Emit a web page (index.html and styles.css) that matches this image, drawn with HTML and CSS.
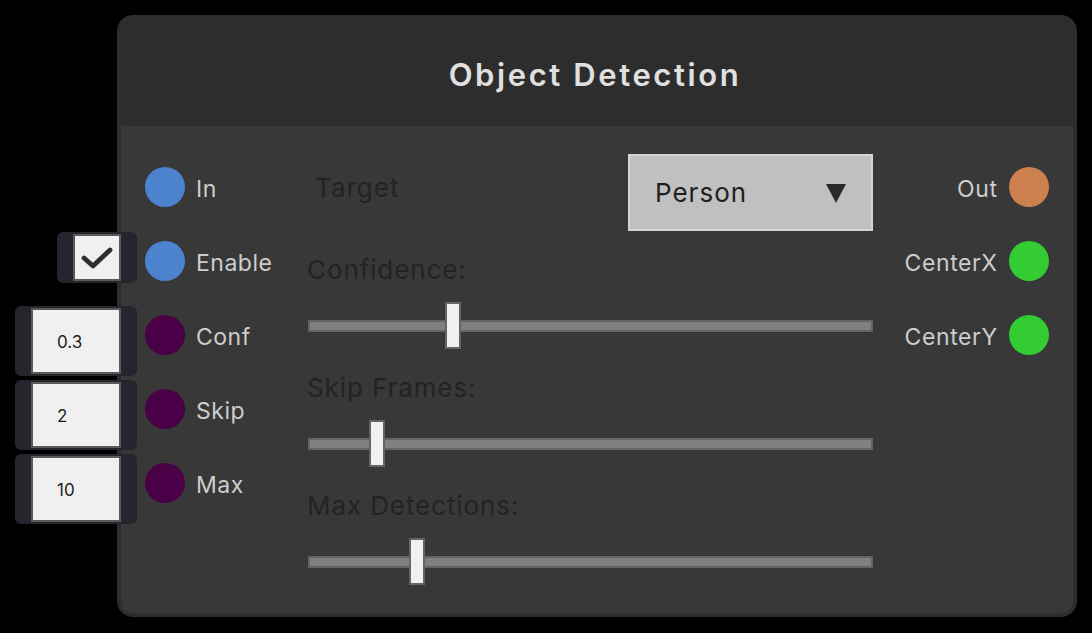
FILE: index.html
```html
<!DOCTYPE html>
<html>
<head>
<meta charset="utf-8">
<link rel="stylesheet" href="styles.css">
</head>
<body>
<div class="node">
  <div class="header">Object Detection</div>
  <div class="content">
    <div class="col-in">
      <div class="row"><span class="sock blue"></span><span class="lbl">In</span></div>
      <div class="row">
        <div class="widget check-widget"><div class="box check-box">
          <svg width="34" height="26" viewBox="0 0 34 26"><path d="M4 13 L13 21 L30 5" fill="none" stroke="#2e2e2e" stroke-width="4.8" stroke-linecap="round" stroke-linejoin="round"/></svg>
        </div></div>
        <span class="sock blue"></span><span class="lbl">Enable</span>
      </div>
      <div class="row">
        <div class="widget num-widget"><div class="box num-box">0.3</div></div>
        <span class="sock purple"></span><span class="lbl">Conf</span>
      </div>
      <div class="row">
        <div class="widget num-widget"><div class="box num-box">2</div></div>
        <span class="sock purple"></span><span class="lbl">Skip</span>
      </div>
      <div class="row">
        <div class="widget num-widget"><div class="box num-box">10</div></div>
        <span class="sock purple"></span><span class="lbl">Max</span>
      </div>
    </div>
    <div class="col-mid">
      <div class="target-row">
        <span class="target-lbl">Target</span>
        <div class="dropdown"><span>Person</span>
          <svg width="20" height="20" viewBox="0 0 20 20"><polygon points="0,1 20,1 10,20" fill="#2a2a2a"/></svg>
        </div>
      </div>
      <div class="section">
        <div class="sec-lbl">Confidence:</div>
        <div class="slider"><div class="track"></div><div class="thumb" style="left:137px"></div></div>
      </div>
      <div class="section">
        <div class="sec-lbl">Skip Frames:</div>
        <div class="slider"><div class="track"></div><div class="thumb" style="left:61px"></div></div>
      </div>
      <div class="section">
        <div class="sec-lbl">Max Detections:</div>
        <div class="slider"><div class="track"></div><div class="thumb" style="left:101px"></div></div>
      </div>
    </div>
    <div class="col-out">
      <div class="row out"><span class="lbl">Out</span><span class="sock orange"></span></div>
      <div class="row out"><span class="lbl">CenterX</span><span class="sock green"></span></div>
      <div class="row out"><span class="lbl">CenterY</span><span class="sock green"></span></div>
    </div>
  </div>
</div>
</body>
</html>
```

FILE: styles.css
```css
html, body {
  margin: 0;
  padding: 0;
  background: #000;
  width: 1092px;
  height: 633px;
  overflow: hidden;
  font-family: Inter, "Noto Sans", sans-serif;
}
.node {
  margin: 15px 0 0 117px;
  width: 960px;
  height: 602px;
  background: #2d2d2d;
  border-radius: 16px;
  display: flex;
  flex-direction: column;
}
.header {
  height: 111px;
  box-sizing: border-box;
  padding: 8px 4px 0 0;
  display: flex;
  align-items: center;
  justify-content: center;
  color: #e0e0e0;
  font-weight: 600;
  font-size: 31px;
  letter-spacing: 2.6px;
}
.content {
  flex: 1;
  margin: 0 4px 4px;
  background: #383838;
  border-radius: 0 0 12px 12px;
  display: grid;
  grid-template-columns: 162px 566px 1fr;
  padding: 24px 24px 0;
}
.row {
  position: relative;
  height: 74px;
  display: flex;
  align-items: center;
  gap: 11px;
}
.row.out {
  justify-content: flex-end;
  gap: 12px;
}
.sock {
  width: 40px;
  height: 40px;
  border-radius: 50%;
  flex: none;
}
.blue { background: #4d82cf; }
.purple { background: #4a0046; }
.orange { background: #cc804d; }
.green { background: #33cc33; }
.lbl {
  color: #cdcdcd;
  font-size: 23px;
  letter-spacing: 0.5px;
  padding-top: 3px;
}
.row.out .lbl {
  letter-spacing: 0.6px;
  margin-right: -0.6px;
}
.widget {
  position: absolute;
  right: 100%;
  margin-right: 8px;
  top: 8px;
  background: #25252d;
  border-radius: 6px;
  padding: 2px 16px;
}
.box {
  background: #f0f0f0;
  border: 2px solid #5a5a5a;
  box-sizing: border-box;
}
.check-box {
  width: 48px;
  height: 47px;
  display: flex;
  align-items: center;
  justify-content: center;
}
.num-box {
  width: 90px;
  height: 66px;
  display: flex;
  align-items: center;
  padding-left: 24px;
  padding-top: 2px;
  font-size: 17px;
  color: #1e1e1e;
}
.col-mid {
  padding-top: 4px;
  display: flex;
  flex-direction: column;
}
.target-row {
  height: 77px;
  display: flex;
  align-items: center;
  justify-content: space-between;
}
.target-lbl {
  padding-left: 8px;
  margin-bottom: 10px;
  color: #232323;
  font-size: 26px;
  letter-spacing: 1px;
}
.dropdown {
  width: 245px;
  height: 77px;
  box-sizing: border-box;
  background: #c0c0c0;
  border: 2px solid #d4d4d4;
  display: flex;
  align-items: center;
  justify-content: space-between;
  padding: 0 25px 0 25px;
  font-size: 26px;
  letter-spacing: 1px;
  color: #1e1e1e;
}
.section {
  margin-top: 24px;
  display: flex;
  flex-direction: column;
}
.sec-lbl {
  height: 30px;
  line-height: 30px;
  color: #232323;
  font-size: 26px;
  letter-spacing: 0.9px;
}
.slider {
  position: relative;
  margin-top: 17px;
  height: 47px;
  margin-left: 1px;
}
.track {
  margin-top: 18px;
  height: 12px;
  box-sizing: border-box;
  background: #808080;
  border: 2px solid #646464;
}
.thumb {
  position: absolute;
  top: 0;
  width: 16px;
  height: 47px;
  box-sizing: border-box;
  background: #f0f0f0;
  border: 2px solid #646464;
}
.col-out {
  display: flex;
  flex-direction: column;
}
```
